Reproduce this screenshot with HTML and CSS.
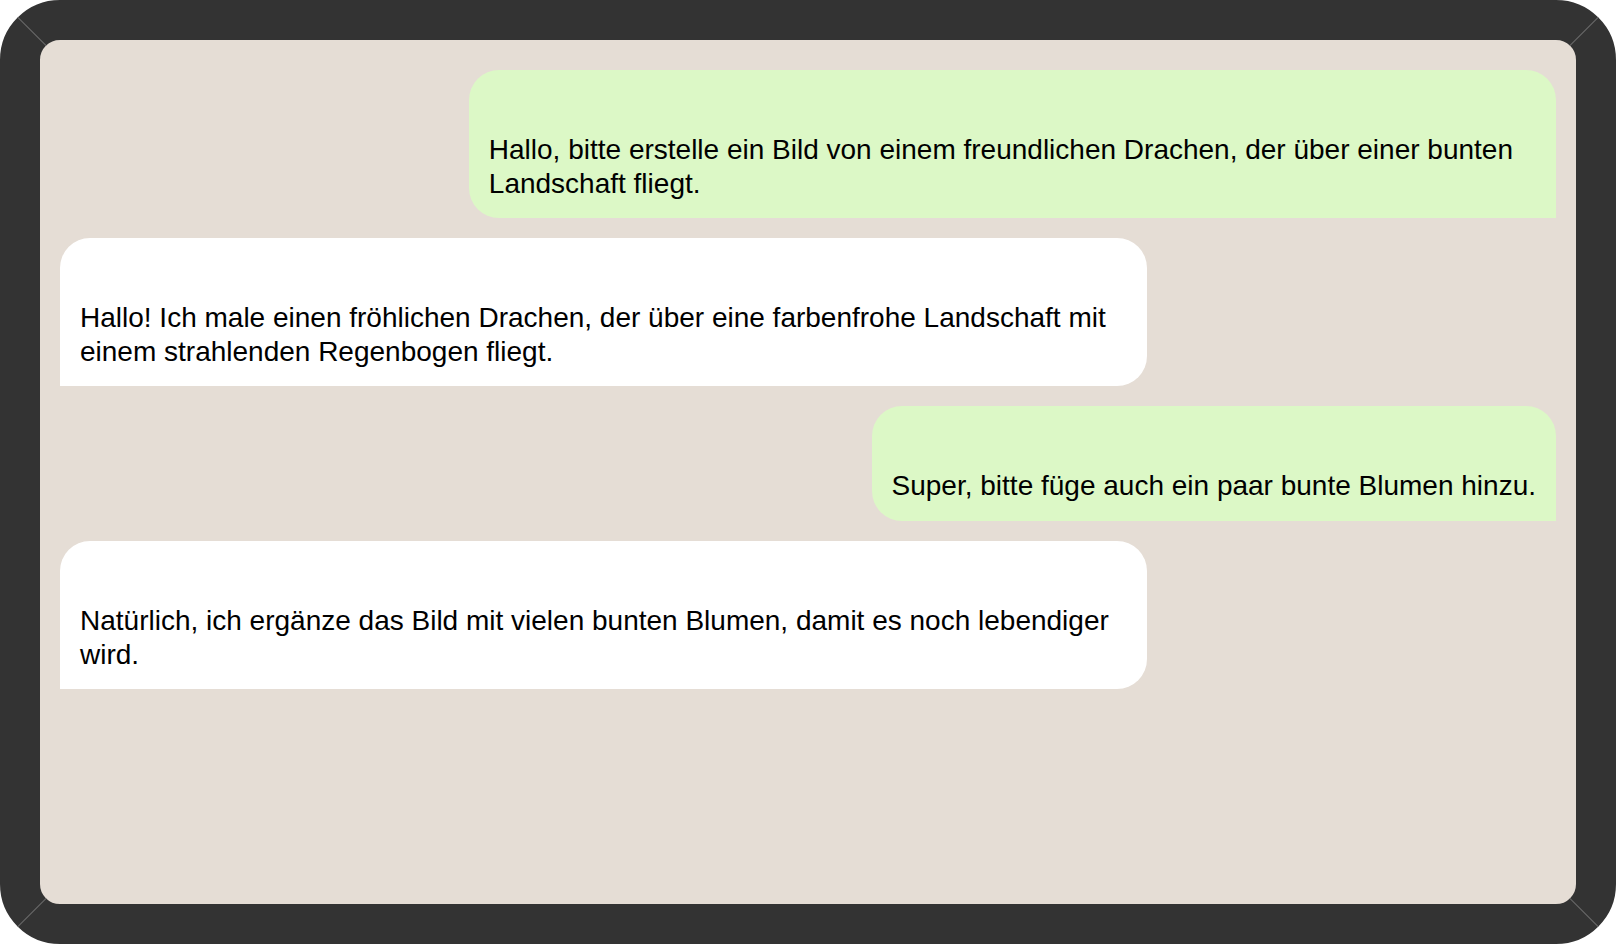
FILE: index.html
```html
<!DOCTYPE html>
<html lang="de">
<head>
<meta charset="utf-8">
<title>Chat</title>
<link rel="stylesheet" href="styles.css">
</head>
<body>
<div class="device">
  <div class="chat">
    <div class="msg msg-user">Hallo, bitte erstelle ein Bild von einem freundlichen Drachen, der über einer bunten Landschaft fliegt.</div>
    <div class="msg msg-bot">Hallo! Ich male einen fröhlichen Drachen, der über eine farbenfrohe Landschaft mit einem strahlenden Regenbogen fliegt.</div>
    <div class="msg msg-user">Super, bitte füge auch ein paar bunte Blumen hinzu.</div>
    <div class="msg msg-bot">Natürlich, ich ergänze das Bild mit vielen bunten Blumen, damit es noch lebendiger wird.</div>
  </div>
</div>
</body>
</html>
```
FILE: styles.css
```css
html, body {
  margin: 0;
  padding: 0;
  background: #ffffff;
}
.device {
  position: relative;
  box-sizing: border-box;
  width: 1616px;
  height: 944px;
  border: 40px solid #333333;
  border-radius: 60px;
  background: #e5ddd5;
}
.chat {
  position: relative;
  box-sizing: border-box;
  height: 100%;
  display: flex;
  flex-direction: column;
  padding: 20px;
  font-family: "Liberation Sans", Arial, sans-serif;
  font-size: 28px;
  line-height: 1.2;
  color: #000000;
}
/* faint seams in the frame corners */
.device::before,
.device::after,
.chat::before,
.chat::after {
  content: "";
  position: absolute;
  width: 40px;
  height: 1px;
  background: #6a6a6a;
}
.device::before {
  left: -28.3px;
  top: -8.8px;
  transform: rotate(45deg);
}
.device::after {
  right: -28.3px;
  top: -8.8px;
  transform: rotate(-45deg);
}
.chat::before {
  left: -28.3px;
  bottom: -8.8px;
  transform: rotate(-45deg);
}
.chat::after {
  right: -28.3px;
  bottom: -8.8px;
  transform: rotate(45deg);
}
.msg {
  max-width: 70%;
  margin: 10px 0;
  padding: 63px 20px 18px;
}
.msg-user {
  align-self: flex-end;
  background: #dcf8c6;
  border-radius: 30px 30px 0 30px;
}
.msg-bot {
  align-self: flex-start;
  background: #ffffff;
  border-radius: 30px 30px 30px 0;
}
```
